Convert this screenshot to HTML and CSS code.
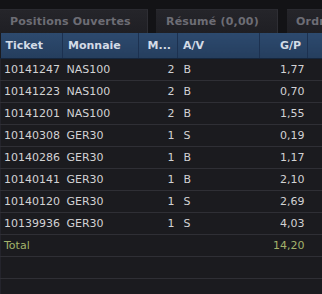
FILE: index.html
```html
<!DOCTYPE html>
<html lang="en">
<head>
  <meta charset="UTF-8" />
  <title>Positions</title>
  <link rel="stylesheet" href="styles.css">
</head>
<body>
  <div class="tabs">
    <div class="tab tab-first">Positions Ouvertes</div>
    <div class="tab tab-second">Résumé (0,00)</div>
    <div class="tab tab-third">Ordres</div>
  </div>

  <table class="grid">
    <colgroup>
      <col class="c-ticket">
      <col class="c-symbol">
      <col class="c-lots">
      <col class="c-side">
      <col class="c-pnl">
      <col class="c-fill">
    </colgroup>
    <thead>
      <tr>
        <th>Ticket</th>
        <th>Monnaie</th>
        <th class="num">M...</th>
        <th>A/V</th>
        <th class="num">G/P</th>
        <th class="fill"></th>
      </tr>
    </thead>
    <tbody>
      <tr><td>10141247</td><td>NAS100</td><td class="num">2</td><td>B</td><td class="num">1,77</td><td></td></tr>
      <tr><td>10141223</td><td>NAS100</td><td class="num">2</td><td>B</td><td class="num">0,70</td><td></td></tr>
      <tr><td>10141201</td><td>NAS100</td><td class="num">2</td><td>B</td><td class="num">1,55</td><td></td></tr>
      <tr><td>10140308</td><td>GER30</td><td class="num">1</td><td>S</td><td class="num">0,19</td><td></td></tr>
      <tr><td>10140286</td><td>GER30</td><td class="num">1</td><td>B</td><td class="num">1,17</td><td></td></tr>
      <tr><td>10140141</td><td>GER30</td><td class="num">1</td><td>B</td><td class="num">2,10</td><td></td></tr>
      <tr><td>10140120</td><td>GER30</td><td class="num">1</td><td>S</td><td class="num">2,69</td><td></td></tr>
      <tr><td>10139936</td><td>GER30</td><td class="num">1</td><td>S</td><td class="num">4,03</td><td></td></tr>
      <tr class="total"><td>Total</td><td></td><td></td><td></td><td class="num">14,20</td><td></td></tr>
      <tr><td></td><td></td><td></td><td></td><td></td><td></td></tr>
      <tr><td></td><td></td><td></td><td></td><td></td><td></td></tr>
    </tbody>
  </table>
</body>
</html>
```

FILE: styles.css
```css
body {
  margin: 0;
  padding: 0;
  background-color: #1b1b1f;
  font-family: 'DejaVu Sans', sans-serif;
  font-size: 11px;
  overflow: hidden;
}

.tabs {
  display: flex;
  height: 33px;
  padding-top: 9px;
  box-sizing: border-box;
  background-color: #131316;
  white-space: nowrap;
  overflow: hidden;
}

.tab {
  height: 24px;
  line-height: 24px;
  box-sizing: border-box;
  background: linear-gradient(#25252a, #1f1f24);
  border-top: 1px solid #2a2a30;
  border-right: 1px solid #2e2e34;
  color: #6d6d75;
  font-weight: bold;
  letter-spacing: 0.2px;
  overflow: hidden;
  flex-shrink: 0;
}

.tab-first {
  width: 148px;
  padding-left: 10px;
}

.tab-second {
  width: 122px;
  margin-left: 8px;
  padding-left: 10px;
}

.tab-third {
  width: 60px;
  margin-left: 9px;
  padding-left: 9px;
}

.grid {
  width: 322px;
  border-collapse: collapse;
  table-layout: fixed;
}

.c-ticket { width: 62px; }
.c-symbol { width: 76px; }
.c-lots { width: 39px; }
.c-side { width: 82px; }
.c-pnl { width: 48px; }
.c-fill { width: 15px; }

.grid th,
.grid td {
  box-sizing: border-box;
  white-space: nowrap;
  overflow: hidden;
}

.grid th {
  height: 25px;
  padding: 0 5px;
  text-align: left;
  color: #d3dbe6;
  font-weight: bold;
  background: linear-gradient(#2d4a6e, #253e5e);
  border-right: 1px solid #1c3150;
  border-bottom: 1px solid #15263d;
}

.grid th.num {
  text-align: right;
  padding-right: 6px;
}

.grid th.fill {
  border-right: none;
}

.grid td {
  height: 22px;
  padding: 0 3px;
  color: #d2d2d4;
  border-bottom: 1px solid #2f2f35;
}

.grid td:first-child {
  border-left: 1px solid #24242c;
}

.grid td:nth-child(2) {
  padding-left: 4px;
}

.grid td:nth-child(4) {
  padding-left: 6px;
}

.grid td.num {
  text-align: right;
}

.total td {
  color: #a3b36b;
}
```
